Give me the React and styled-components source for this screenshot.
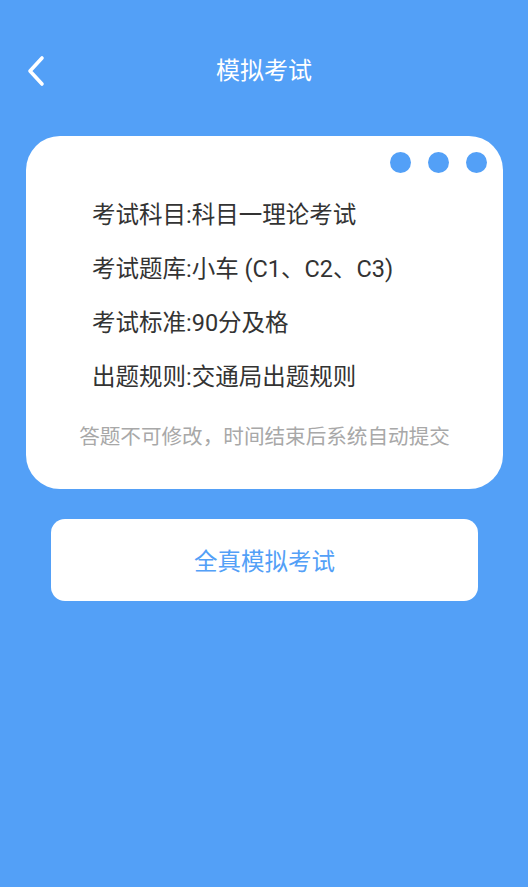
import React from "react";
import styled, { createGlobalStyle } from "styled-components";

const Global = createGlobalStyle`
  html, body { margin: 0; padding: 0; background: #53a0f7; }
  body { font-family: Roboto, "Noto Sans CJK SC", "Noto Sans", sans-serif; }
  * { box-sizing: border-box; }
`;

const Page = styled.div`
  min-height: 887px;
  background: #53a0f7;
  display: flex;
  flex-direction: column;
`;

const Header = styled.header`
  display: grid;
  grid-template-columns: 1fr auto 1fr;
  align-items: center;
  height: 48px;
  margin-top: 47px;
`;

const BackButton = styled.button`
  justify-self: start;
  display: flex;
  align-items: center;
  background: none;
  border: 0;
  padding: 0 0 0 24px;
  cursor: pointer;
`;

const Title = styled.h1`
  margin: 0;
  font-size: 24px;
  font-weight: 400;
  color: #fff;
  line-height: 48px;
`;

const Card = styled.section`
  margin: 41px 25px 0 26px;
  background: #fff;
  border-radius: 34px;
  padding: 16px 16px 37px 66px;
  display: flex;
  flex-direction: column;
`;

const Dots = styled.div`
  display: flex;
  justify-content: flex-end;
  gap: 17px;
`;

const Dot = styled.span`
  width: 21px;
  height: 21px;
  border-radius: 50%;
  background: #53a0f7;
`;

const InfoList = styled.ul`
  list-style: none;
  margin: 15px 0 0;
  padding: 0;
`;

const InfoItem = styled.li`
  font-size: 23.5px;
  line-height: 54px;
  color: #333;
  white-space: nowrap;
`;

const Note = styled.p`
  margin: 18px 0 0 -50px;
  font-size: 20.6px;
  line-height: 30px;
  color: #a8a8a8;
  text-align: center;
  white-space: nowrap;
`;

const StartButton = styled.button`
  margin: 30px 50px 0 51px;
  height: 82px;
  border: 0;
  border-radius: 14px;
  background: #fff;
  color: #53a0f7;
  font-family: inherit;
  font-size: 23.5px;
  cursor: pointer;
`;

const items = [
  "考试科目:科目一理论考试",
  "考试题库:小车 (C1、C2、C3)",
  "考试标准:90分及格",
  "出题规则:交通局出题规则",
];

export default function App() {
  return (
    <Page>
      <Global />
      <Header>
        <BackButton aria-label="返回">
          <svg width="24" height="32" viewBox="0 0 24 32">
            <path d="M18 3 L6 16 L18 29" fill="none" stroke="#fff" strokeWidth="3.6" strokeLinecap="round" strokeLinejoin="round" />
          </svg>
        </BackButton>
        <Title>模拟考试</Title>
        <span />
      </Header>
      <Card>
        <Dots>
          <Dot />
          <Dot />
          <Dot />
        </Dots>
        <InfoList>
          {items.map((t) => (
            <InfoItem key={t}>{t}</InfoItem>
          ))}
        </InfoList>
        <Note>答题不可修改，时间结束后系统自动提交</Note>
      </Card>
      <StartButton>全真模拟考试</StartButton>
    </Page>
  );
}
